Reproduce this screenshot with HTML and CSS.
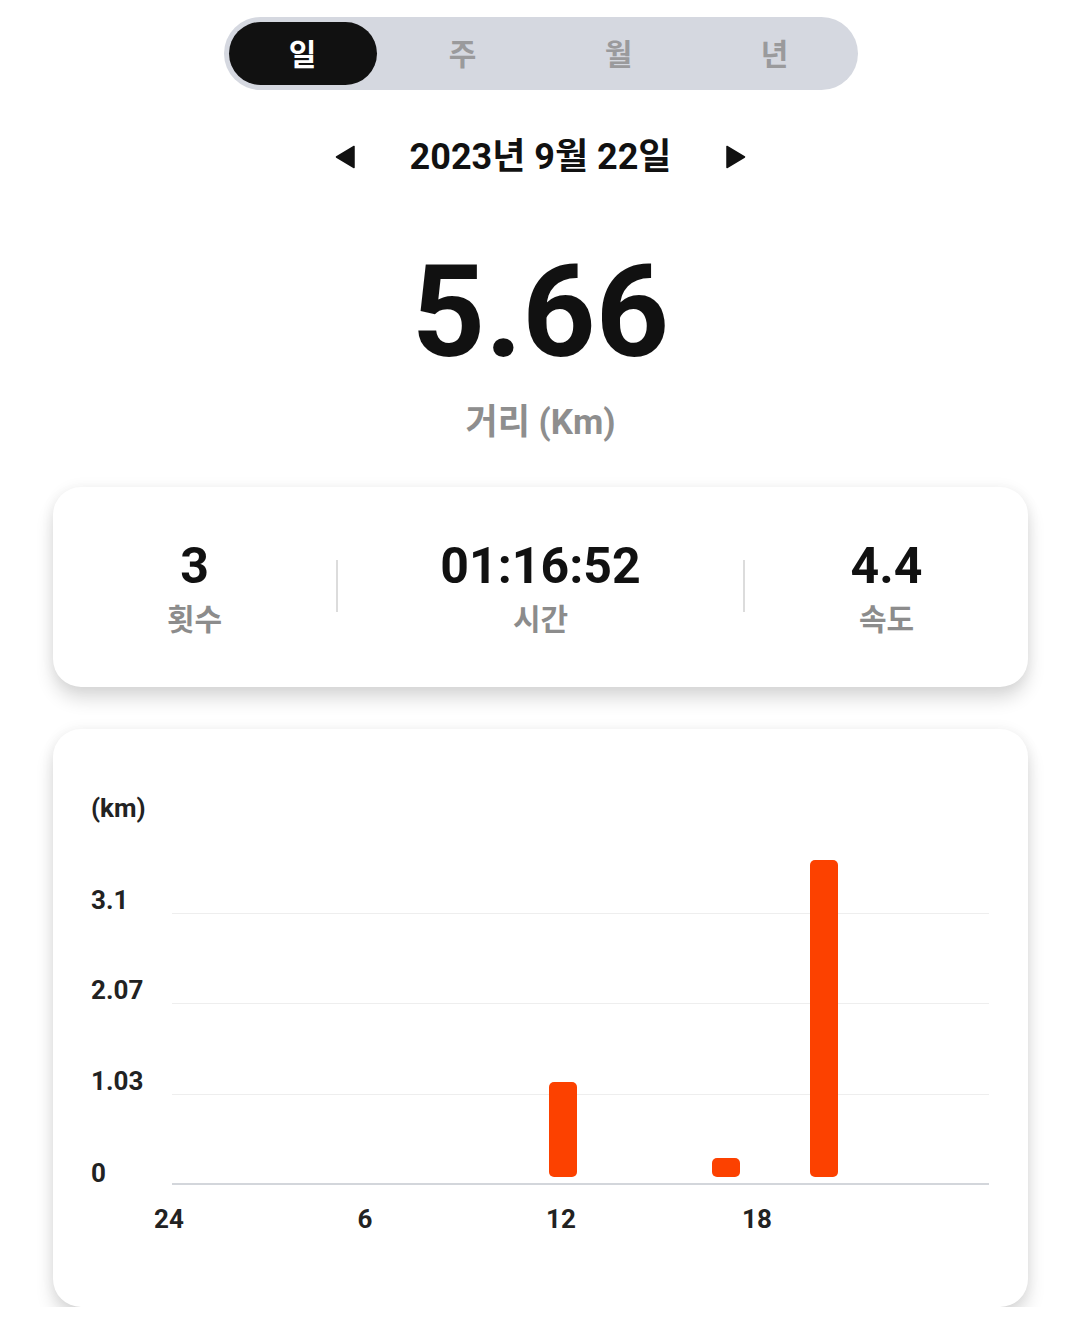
FILE: index.html
```html
<!DOCTYPE html>
<html lang="ko">
<head>
<meta charset="utf-8">
<title>거리 통계</title>
<link rel="stylesheet" href="styles.css">
</head>
<body>
<div class="page">
  <div class="segmented">
    <div class="tab active">일</div>
    <div class="tab">주</div>
    <div class="tab">월</div>
    <div class="tab">년</div>
  </div>

  <div class="date-row">
    <svg class="arrow" width="20" height="24" viewBox="0 0 20 24"><path d="M19 1.5 L19 22.5 L1.5 12 Z" fill="#111" stroke="#111" stroke-width="1.5" stroke-linejoin="round"/></svg>
    <div class="date">2023년 9월 22일</div>
    <svg class="arrow" width="20" height="24" viewBox="0 0 20 24"><path d="M1 1.5 L1 22.5 L18.5 12 Z" fill="#111" stroke="#111" stroke-width="1.5" stroke-linejoin="round"/></svg>
  </div>

  <div class="big-number">5.66</div>
  <div class="big-label">거리 (Km)</div>

  <div class="card stats">
    <div class="stat">
      <div class="stat-value">3</div>
      <div class="stat-label">횟수</div>
    </div>
    <div class="divider"></div>
    <div class="stat">
      <div class="stat-value">01:16:52</div>
      <div class="stat-label">시간</div>
    </div>
    <div class="divider"></div>
    <div class="stat">
      <div class="stat-value">4.4</div>
      <div class="stat-label">속도</div>
    </div>
  </div>

  <div class="card chart-card">
    <div class="unit">(km)</div>
    <div class="chart">
      <div class="y-axis">
        <div class="y-label" style="bottom:272px">3.1</div>
        <div class="y-label" style="bottom:182px">2.07</div>
        <div class="y-label" style="bottom:91px">1.03</div>
        <div class="y-label" style="bottom:-1px">0</div>
      </div>
      <div class="plot">
        <div class="gridline" style="bottom:271px"></div>
        <div class="gridline" style="bottom:181px"></div>
        <div class="gridline" style="bottom:90px"></div>
        <div class="baseline"></div>
        <div class="bar" style="left:377px;height:95px"></div>
        <div class="bar" style="left:540px;height:19px"></div>
        <div class="bar" style="left:638px;height:317px"></div>
      </div>
    </div>
    <div class="x-axis">
      <div class="x-label" style="left:-3px">24</div>
      <div class="x-label" style="left:193px">6</div>
      <div class="x-label" style="left:389px">12</div>
      <div class="x-label" style="left:585px">18</div>
    </div>
  </div>
</div>
</body>
</html>
```

FILE: styles.css
```css
* { box-sizing: border-box; }

html, body {
  margin: 0;
  padding: 0;
  background: #ffffff;
}

body {
  font-family: Roboto, "Noto Sans CJK KR", sans-serif;
  color: #111111;
}

.page {
  padding: 17px 52px 0 53px;
  display: flex;
  flex-direction: column;
  align-items: stretch;
}

.segmented {
  align-self: center;
  width: 634px;
  height: 73px;
  padding: 5px;
  border-radius: 37px;
  background: #d5d8e0;
  display: grid;
  grid-template-columns: repeat(4, 1fr);
}

.tab {
  display: flex;
  align-items: center;
  justify-content: center;
  font-size: 30px;
  font-weight: 700;
  color: #9a9a9c;
  border-radius: 32px;
  line-height: 1;
  padding-top: 2px;
}

.tab.active {
  margin-right: 8px;
  background: #111111;
  color: #ffffff;
}

.date-row {
  margin-top: 45px;
  display: flex;
  align-items: center;
  justify-content: center;
  gap: 55px;
}

.arrow { display: block; }

.date {
  font-size: 36px;
  font-weight: 700;
  line-height: 44px;
  color: #111111;
}

.big-number {
  margin-top: 69px;
  text-align: center;
  font-size: 128px;
  font-weight: 700;
  line-height: 128px;
  color: #111111;
}

.big-label {
  margin-top: 27px;
  text-align: center;
  font-size: 35px;
  font-weight: 700;
  line-height: 40px;
  color: #8e8e8e;
}

.card {
  background: #ffffff;
  border-radius: 28px;
  box-shadow: 0 12px 18px rgba(0, 0, 0, 0.14), 0 0 14px rgba(0, 0, 0, 0.06);
}

.stats {
  margin-top: 44px;
  padding: 54px 0 49px;
  display: grid;
  grid-template-columns: 283px 2px 1fr 2px 283px;
  align-items: start;
}

.stat {
  display: flex;
  flex-direction: column;
  align-items: center;
  gap: 11px;
}

.stat-value {
  font-size: 50px;
  font-weight: 700;
  line-height: 50px;
  color: #111111;
}

.stat-label {
  font-size: 30px;
  font-weight: 700;
  line-height: 36px;
  color: #8c8c8c;
}

.divider {
  margin-top: 19px;
  height: 52px;
  background: #dcdcdc;
}

.chart-card {
  margin-top: 42px;
  padding: 66px 39px 75px 38px;
}

.unit {
  font-size: 26px;
  font-weight: 700;
  line-height: 26px;
  color: #222222;
}

.chart {
  margin-top: 30px;
  display: grid;
  grid-template-columns: 81px 817px;
  height: 334px;
}

.y-axis {
  position: relative;
}

.y-label {
  position: absolute;
  left: 0;
  font-size: 26px;
  font-weight: 700;
  line-height: 26px;
  color: #222222;
}

.plot {
  position: relative;
}

.gridline {
  position: absolute;
  left: 0;
  right: 0;
  height: 1px;
  background: #eeeeee;
}

.baseline {
  position: absolute;
  left: 0;
  right: 0;
  bottom: 0;
  height: 2px;
  background: #d3d6db;
}

.bar {
  position: absolute;
  bottom: 8px;
  width: 28px;
  border-radius: 5px;
  background: #fc4100;
}

.x-axis {
  position: relative;
  margin-top: 21px;
  margin-left: 81px;
  height: 26px;
}

.x-label {
  position: absolute;
  top: 0;
  transform: translateX(-50%);
  font-size: 26px;
  font-weight: 700;
  line-height: 26px;
  color: #222222;
}
```
